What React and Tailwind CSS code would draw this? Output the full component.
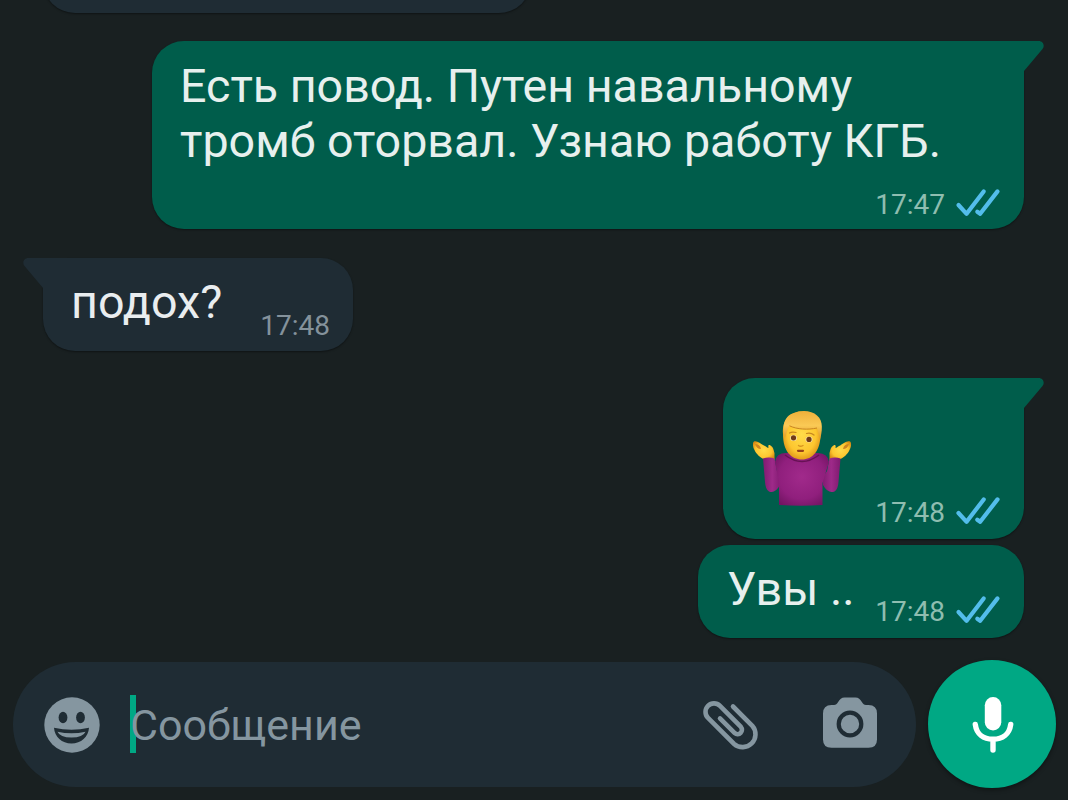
import React from 'react';

const Ticks = () => (
    <svg className="w-[46px] h-[31px] ml-[10px] -mt-[2px]" viewBox="0 0 46 31" fill="none" stroke="#53bdeb" strokeWidth="4.200" strokeLinecap="round" strokeLinejoin="round">
        <path d="M3.500 17 L11.600 25.800 L28.700 3.400" />
        <path d="M22.300 23.700 L25.200 25.800 L42.500 3.400" />
    </svg>
);

const Tail = ({ side }) => (
    <svg
        className={side === 'right' ? 'absolute top-0 -right-[20px] w-[52px] h-[33px] text-[#005d4b]' : 'absolute top-0 -left-[20px] w-[52px] h-[33px] -scale-x-100 text-[#1f2c34]'}
        viewBox="0 0 52 33"
        fill="currentColor"
    >
        <path d="M0 0 H46.500 C51.500 0 53 4.800 50.500 8 L32 30 V33 H0 Z" />
    </svg>
);

const Bubble = ({ mine, tail, className, children }) => (
    <div className={`relative flex rounded-[32px] shadow-[0_1px_2px_rgba(0,0,0,0.4)] ${mine ? 'self-end bg-[#005d4b]' : 'self-start bg-[#1f2c34]'} ${className}`}>
        {tail && <Tail side={mine ? 'right' : 'left'} />}
        {children}
    </div>
);

const Meta = ({ time, mine }) => (
    <div className={`relative flex items-center h-[33px] text-[28px] leading-[33px] ${mine ? 'text-[#8fbdb0]' : 'text-[#84929b]'}`}>
        <span>{time}</span>
        {mine && <Ticks />}
    </div>
);

const Shrug = () => (
    <svg className="relative w-[100px] h-[100px]" viewBox="0 0 100 100">
        <defs>
            <radialGradient id="face" cx="50%" cy="48%" r="58%">
                <stop offset="0" stopColor="#ffdc4a" />
                <stop offset="0.65" stopColor="#fdc62f" />
                <stop offset="1" stopColor="#d98b14" />
            </radialGradient>
            <linearGradient id="hair" x1="0" y1="0" x2="0" y2="1">
                <stop offset="0" stopColor="#efb03a" />
                <stop offset="0.5" stopColor="#fac955" />
                <stop offset="1" stopColor="#dc9424" />
            </linearGradient>
            <radialGradient id="shirt" cx="50%" cy="45%" r="65%">
                <stop offset="0" stopColor="#a12a8b" />
                <stop offset="0.65" stopColor="#901f7d" />
                <stop offset="1" stopColor="#701461" />
            </radialGradient>
            <linearGradient id="sleeve" x1="0" y1="0" x2="1" y2="0">
                <stop offset="0" stopColor="#801a70" />
                <stop offset="0.5" stopColor="#9e2a89" />
                <stop offset="1" stopColor="#801a70" />
            </linearGradient>
        </defs>
        {/* hands */}
        <path d="M10.500 50 C8 49 3 45 1.500 41 C-.5 38 -.5 33.500 1 32.500 C4 31 8 35 12 37 C14 38 14.500 39 15.500 39 C15 36.500 15.500 35.500 17.500 36.500 C20.500 38 20.500 41 21.500 44 L21.500 51 Z" fill="url(#face)" />
        <path d="M87.500 50 C90 49 95 45 96.500 41 C98.500 38 98.500 33.500 97 32.500 C94 31 90 35 86 37 C84 38 83.500 39 82.500 39 C83 36.500 82.500 35.500 80.500 36.500 C77.500 38 77.500 41 76.500 44 L76.500 51 Z" fill="url(#face)" />
        <path d="M2 35 Q7 35 8 40 Q3.500 40 2 35 Z M96 35 Q91 35 90 40 Q94.500 40 96 35 Z" fill="#cf8420" />
        {/* arms */}
        <path d="M10 49.500 Q16 47.500 21.500 49.500 L24 62 L28.500 69 L27 76 Q22 85 16 82.500 Q12.500 80.500 12 73 Z" fill="url(#sleeve)" />
        <path d="M87.500 49.500 Q82 47.500 76.500 49.500 L74 62 L69 69 L70 76 Q75 85 81.500 82.500 Q85 80.500 85.500 73 Z" fill="url(#sleeve)" />
        {/* body */}
        <path d="M26 96 V74 L22 53 Q23 44 33 44 H65 Q75 44.500 76 53 L69.500 74 V96 Q48 97.500 26 96 Z" fill="url(#shirt)" />
        <path d="M32 46 Q49 59 66 46" fill="none" stroke="#671154" strokeWidth="1.500" />
        {/* head */}
        <g transform="translate(-1 0)">
            <path d="M31 25 C30 11 38 2.500 49.500 2.500 C62 2.500 69.500 11 68.500 25 C68.500 42 60.500 50.500 50 50.500 C39 50.500 31 42 31 25 Z" fill="url(#face)" />
            <path d="M33 29 C28.500 14 35 6 41 4.500 C49 .5 60 1.500 65 6.500 C72 12 70 23 68 31 C67 26 66 23 65 19 C55 21 43 20 37.500 16.500 C35 20 34.500 24 33 29 Z" fill="url(#hair)" />
            <path d="M37.500 16.800 C45 20.500 56 21 65 19" fill="none" stroke="#c98423" strokeWidth="1" />
            <path d="M37.500 24 Q40 22.500 44 23.500 M54.500 24.500 Q59 23.500 62 26" fill="none" stroke="#c98a20" strokeWidth="1.200" strokeLinecap="round" />
            <ellipse cx="41.500" cy="29" rx="3.500" ry="3" fill="#f6dfab" />
            <ellipse cx="57" cy="30.500" rx="3.500" ry="3" fill="#f6dfab" />
            <circle cx="41.500" cy="28.800" r="2.600" fill="#6f3a16" />
            <circle cx="57" cy="30.400" r="2.600" fill="#6f3a16" />
            <path d="M46.500 36.500 Q48.500 38 51 36.500" fill="none" stroke="#d8951f" strokeWidth="1.400" strokeLinecap="round" />
            <path d="M46 41.800 H51" fill="none" stroke="#964119" strokeWidth="2.200" strokeLinecap="round" />
        </g>
    </svg>
);

const Smiley = () => (
    <svg className="w-[56px] h-[56px]" viewBox="0 0 56 56">
        <circle cx="28" cy="28" r="27.700" fill="#8596a0" />
        <ellipse cx="19" cy="20.500" rx="4.400" ry="5.800" fill="#1f2c34" />
        <ellipse cx="36.500" cy="20.500" rx="4.400" ry="5.800" fill="#1f2c34" />
        <path d="M10 30.800 Q27.500 34.500 45 30.800 C44.500 40 37 46.500 27.500 46.500 C18 46.500 10.500 40 10 30.800 Z" fill="#1f2c34" />
        <path d="M13.500 34.700 Q27.500 37.700 41.500 34.700 Q39 40.500 27.500 40.500 Q16 40.500 13.500 34.700 Z" fill="#8596a0" />
    </svg>
);

const Clip = () => (
    <svg className="w-[60px] h-[54px]" viewBox="-2 -1 60 54" fill="none" stroke="#8596a0" strokeWidth="4.600" strokeLinecap="round">
        <path d="M31 7.500 L50.300 26.800 A12.900 12.900 0 0 1 32.100 45 L6 18.900 A8.450 8.450 0 0 1 18 6.900 L38.900 27.900 A4.400 4.400 0 0 1 32.700 34.100 L18 19.400" />
    </svg>
);

const Camera = () => (
    <svg className="w-[54px] h-[51px]" viewBox="0 0 54 51">
        <path d="M8.500 8 H11 C13 8 13.800 7 14.800 5.500 C17 2 18.500 .5 21.500 .5 H32.500 C35.500 .5 37 2 39.200 5.500 C40.200 7 41 8 43 8 H45.500 Q54 8 54 16.500 V42.500 Q54 50.700 45.500 50.700 H8.500 Q0 50.700 0 42.500 V16.500 Q0 8 8.500 8 Z" fill="#8596a0" />
        <circle cx="27" cy="27" r="11.300" fill="none" stroke="#1f2c34" strokeWidth="4.200" />
    </svg>
);

const Mic = () => (
    <svg className="w-[42px] h-[58px] mt-[2px] ml-px" viewBox="0 0 42 58">
        <rect x="12.800" y="1" width="16.500" height="33.500" rx="8.250" fill="#fff" />
        <path d="M3.300 28.500 C4.500 38 11.500 43.200 21 43.200 C30.500 43.200 37.500 38 38.700 28.500 M21 43.200 V54" fill="none" stroke="#fff" strokeWidth="5.400" strokeLinecap="round" />
    </svg>
);

const App = () => {
    return (
        <main className="w-[1068px] h-[800px] overflow-hidden bg-[#192021] font-[Roboto,sans-serif] text-[46.600px] leading-[55px] text-[#e7f0ee]">
            {/* Messages */}
            <div className="flex flex-col h-[660px] pl-[43px] pr-[44px]">
                <Bubble className="w-[488px] h-[92px] -mt-[79px] shrink-0" />

                <Bubble mine tail className="w-[872px] h-[188px] mt-[28px] flex-col px-[28px] pt-[18px]">
                    <p className="relative whitespace-nowrap">
                        Есть повод. Путен навальному
                        <br />
                        тромб оторвал. Узнаю работу КГБ.
                    </p>
                    <div className="flex justify-end mt-[19px] -mr-[5px]">
                        <Meta time="17:47" mine />
                    </div>
                </Bubble>

                <Bubble tail className="w-[310px] h-[93px] mt-[29px] pl-[28px] pr-[23px] pt-[17px] justify-between">
                    <p className="relative text-[#e9edef]">подох?</p>
                    <div className="mt-[34px]">
                        <Meta time="17:48" />
                    </div>
                </Bubble>

                <Bubble mine tail className="w-[301px] h-[161px] mt-[27px] pl-[30px] pr-[23px] pt-[31px] justify-between">
                    <Shrug />
                    <div className="mt-[87px]">
                        <Meta time="17:48" mine />
                    </div>
                </Bubble>

                <Bubble mine className="w-[326px] h-[93px] mt-[6px] pl-[29px] pr-[23px] pt-[17px] justify-between">
                    <p>Увы ..</p>
                    <div className="mt-[33px]">
                        <Meta time="17:48" mine />
                    </div>
                </Bubble>
            </div>

            {/* Input */}
            <div className="flex items-center h-[128px] pl-[13px] pr-[12px] justify-between">
                <div className="flex items-center w-[903px] h-[125px] mt-px pl-[31px] pr-[39px] rounded-full bg-[#1f2c34]">
                    <Smiley />
                    <div className="w-[6px] h-[58px] ml-[30px] -mt-[2px] bg-[#00a884]"></div>
                    <span className="relative flex-1 -ml-[6px] text-[43px] leading-[50px] text-[#8596a0]">Сообщение</span>
                    <Clip />
                    <div className="ml-[63px] -mt-[4px]">
                        <Camera />
                    </div>
                </div>
                <div className="flex items-center justify-center w-[128px] h-[128px] rounded-full bg-[#00a884] shadow-[0_2px_4px_rgba(0,0,0,0.4)]">
                    <Mic />
                </div>
            </div>
        </main>
    );
};

export default App;
